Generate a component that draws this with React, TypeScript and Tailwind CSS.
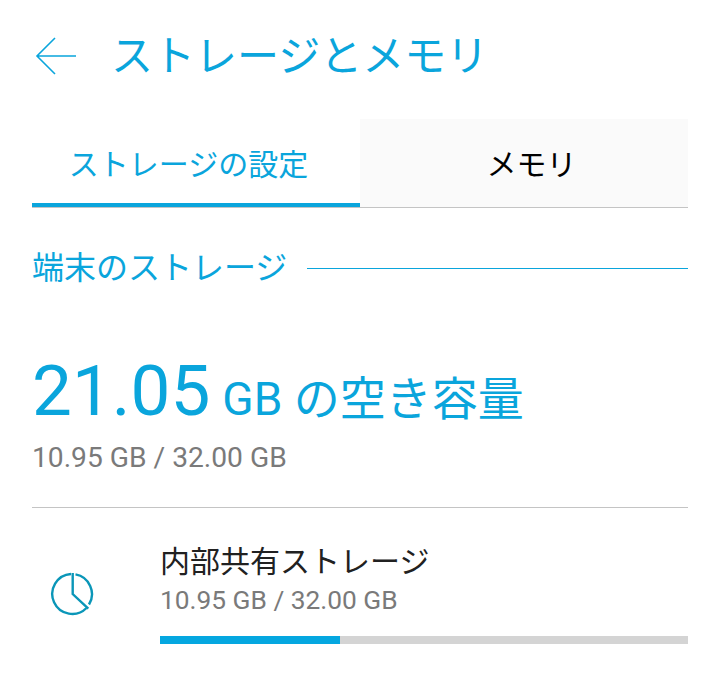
const cjk = "font-['Roboto','Noto_Sans_CJK_JP',sans-serif]";

export default function App() {
  return (
    <div className={`h-[696px] w-[720px] overflow-hidden bg-white ${cjk}`}>
      <header className="flex h-[119px] items-start pl-[35px] pt-[35px]">
        <svg width="42" height="42" viewBox="0 0 42 42" fill="none" stroke="#0aa5dc" strokeWidth="1.6">
          <path d="M41 21H2M20 3 2 21l18 18" />
        </svg>
        <h1 className="ml-[34px] mt-[-5px] text-[42px] leading-[54px] text-[#0aa5dc]">ストレージとメモリ</h1>
      </header>

      <div className="mx-[32px] flex h-[89px] border-b border-[#c4c4c4]">
        <div className="flex w-[328px] items-center justify-center border-b-4 border-[#0aa5dc] pr-[15px] pt-[6px] text-[30px] text-[#0aa5dc]">
          ストレージの設定
        </div>
        <div className="flex flex-1 items-center justify-center bg-[#fafafa] pl-[15px] pt-[3px] text-[30px] text-black">メモリ</div>
      </div>

      <div className="mx-[32px] mt-[38px] flex items-center">
        <span className="text-[32px] leading-[44px] text-[#0aa5dc]">端末のストレージ</span>
        <div className="ml-[20px] h-px flex-1 bg-[#0aa5dc]" />
      </div>

      <div className="mx-[32px] mt-[59px] flex items-baseline text-[#0aa5dc]">
        <span className="text-[71px] leading-[84px]">21.05</span>
        <span className="ml-[12px] text-[46px]">GB の空き容量</span>
      </div>
      <div className="mx-[32px] mt-[6px] text-[28.2px] leading-[36px] text-[#7a7a7a]">10.95 GB / 32.00 GB</div>

      <div className="mx-[32px] mt-[31px] h-px bg-[#c4c4c4]" />

      <div className="ml-[50px] mr-[32px] mt-[34px] flex">
        <svg className="mt-[30px]" width="44" height="44" viewBox="0 0 44 44" fill="none" stroke="#0a96b8" strokeWidth="2.4">
          <path d="M21 2A20 20 0 1 0 36.5 36" />
          <path d="M25.5 2.4A20 20 0 0 1 39 32.5" />
          <path d="M22.7 1V22L38.3 36.7" />
        </svg>
        <div className="ml-[66px] flex-1">
          <div className="text-[30px] leading-[40px] text-[#212121]">内部共有ストレージ</div>
          <div className="text-[26.3px] leading-[36px] text-[#7a7a7a]">10.95 GB / 32.00 GB</div>
          <div className="mt-[18px] h-[8px] bg-[#d4d4d4]">
            <div className="h-full w-[180px] bg-[#04a7e0]" />
          </div>
        </div>
      </div>
    </div>
  );
}
